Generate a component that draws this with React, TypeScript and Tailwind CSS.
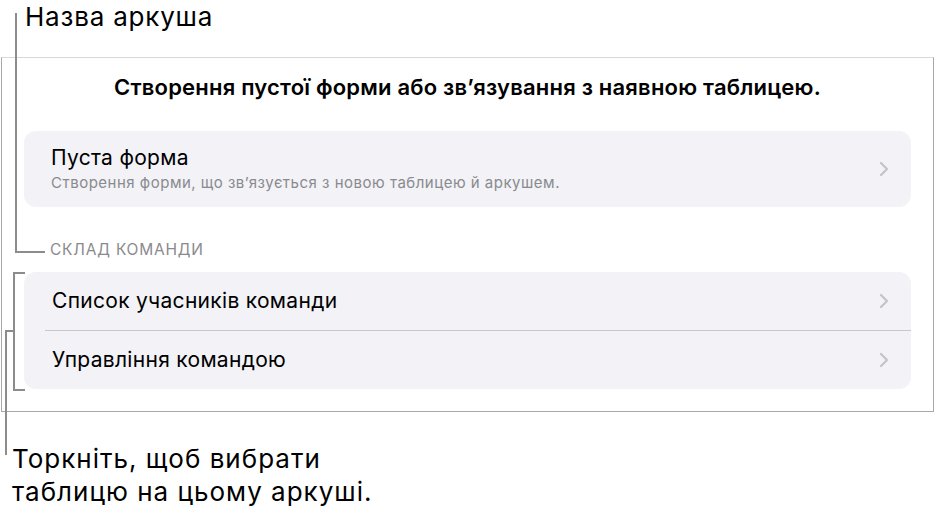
const TEAM_ROWS = ["Список учасників команди", "Управління командою"];

const Chevron = () => (
    <svg width="10" height="16" viewBox="0 0 10 16" fill="none">
        <path
            d="M2 2 L8 8 L2 14"
            stroke="#c4c4c7"
            strokeWidth="2.2"
            strokeLinecap="round"
            strokeLinejoin="round"
        />
    </svg>
);

const App = () => {
    return (
        <div
            className="relative h-[513px] w-[935px] overflow-hidden bg-white text-black"
            style={{ fontFamily: "Inter, 'Noto Sans', sans-serif" }}
        >
            <p className="h-[57px] pl-[25px] pt-[1px] text-[26px] leading-[32px] tracking-[0.8px]">
                Назва аркуша
            </p>

            <div className="mx-[1px] h-[355px] border border-[#a8a8a8] border-t-[#d8d8d8] px-[22px]">
                <p className="pt-[15px] text-center text-[22px] font-semibold leading-[28px] tracking-[0.2px]">
                    Створення пустої форми або зв’язування з наявною таблицею.
                </p>

                <div className="mt-[30px] flex h-[76px] items-center rounded-[12px] bg-[#f2f2f7] pl-[27px] pr-[22px]">
                    <div className="flex-1">
                        <p className="text-[21px] leading-[26px] tracking-[0.3px]">
                            Пуста форма
                        </p>
                        <p className="mt-[2px] text-[15px] leading-[20px] tracking-[0.5px] text-[#8a8a8e]">
                            Створення форми, що зв’язується з новою таблицею й аркушем.
                        </p>
                    </div>
                    <Chevron />
                </div>

                <p className="mt-[33px] pl-[26px] text-[15.5px] leading-[20px] tracking-[0.8px] text-[#8a8a8e]">
                    СКЛАД КОМАНДИ
                </p>

                <div className="mt-[12px] flex flex-col rounded-[12px] bg-[#f2f2f7]">
                    {TEAM_ROWS.map((row, i) => (
                        <div key={row} className="flex flex-col">
                            {i > 0 && <div className="ml-[21px] h-px bg-[#c8c8cc]" />}
                            <div className="flex h-[58px] items-center pl-[28px] pr-[22px]">
                                <p className="flex-1 text-[21px] leading-[26px] tracking-[0.3px]">
                                    {row}
                                </p>
                                <Chevron />
                            </div>
                        </div>
                    ))}
                </div>
            </div>

            <p className="pl-[12px] pt-[30px] text-[26px] leading-[33px] tracking-[1px]">
                Торкніть, щоб вибрати
                <br />
                таблицю на цьому аркуші.
            </p>

            {/* callout lines */}
            <div className="absolute left-[15px] top-[13px] h-[240px] w-[2px] bg-[#8c8c8c]" />
            <div className="absolute left-[15px] top-[251px] h-[2px] w-[30px] bg-[#8c8c8c]" />

            <div className="absolute left-[13px] top-[272px] h-[119px] w-[12px] border-y-2 border-l-2 border-[#8c8c8c]" />
            <div className="absolute left-[5px] top-[330px] h-[2px] w-[9px] bg-[#8c8c8c]" />
            <div className="absolute left-[5px] top-[330px] h-[125px] w-[2px] bg-[#8c8c8c]" />
        </div>
    );
};

export default App;
